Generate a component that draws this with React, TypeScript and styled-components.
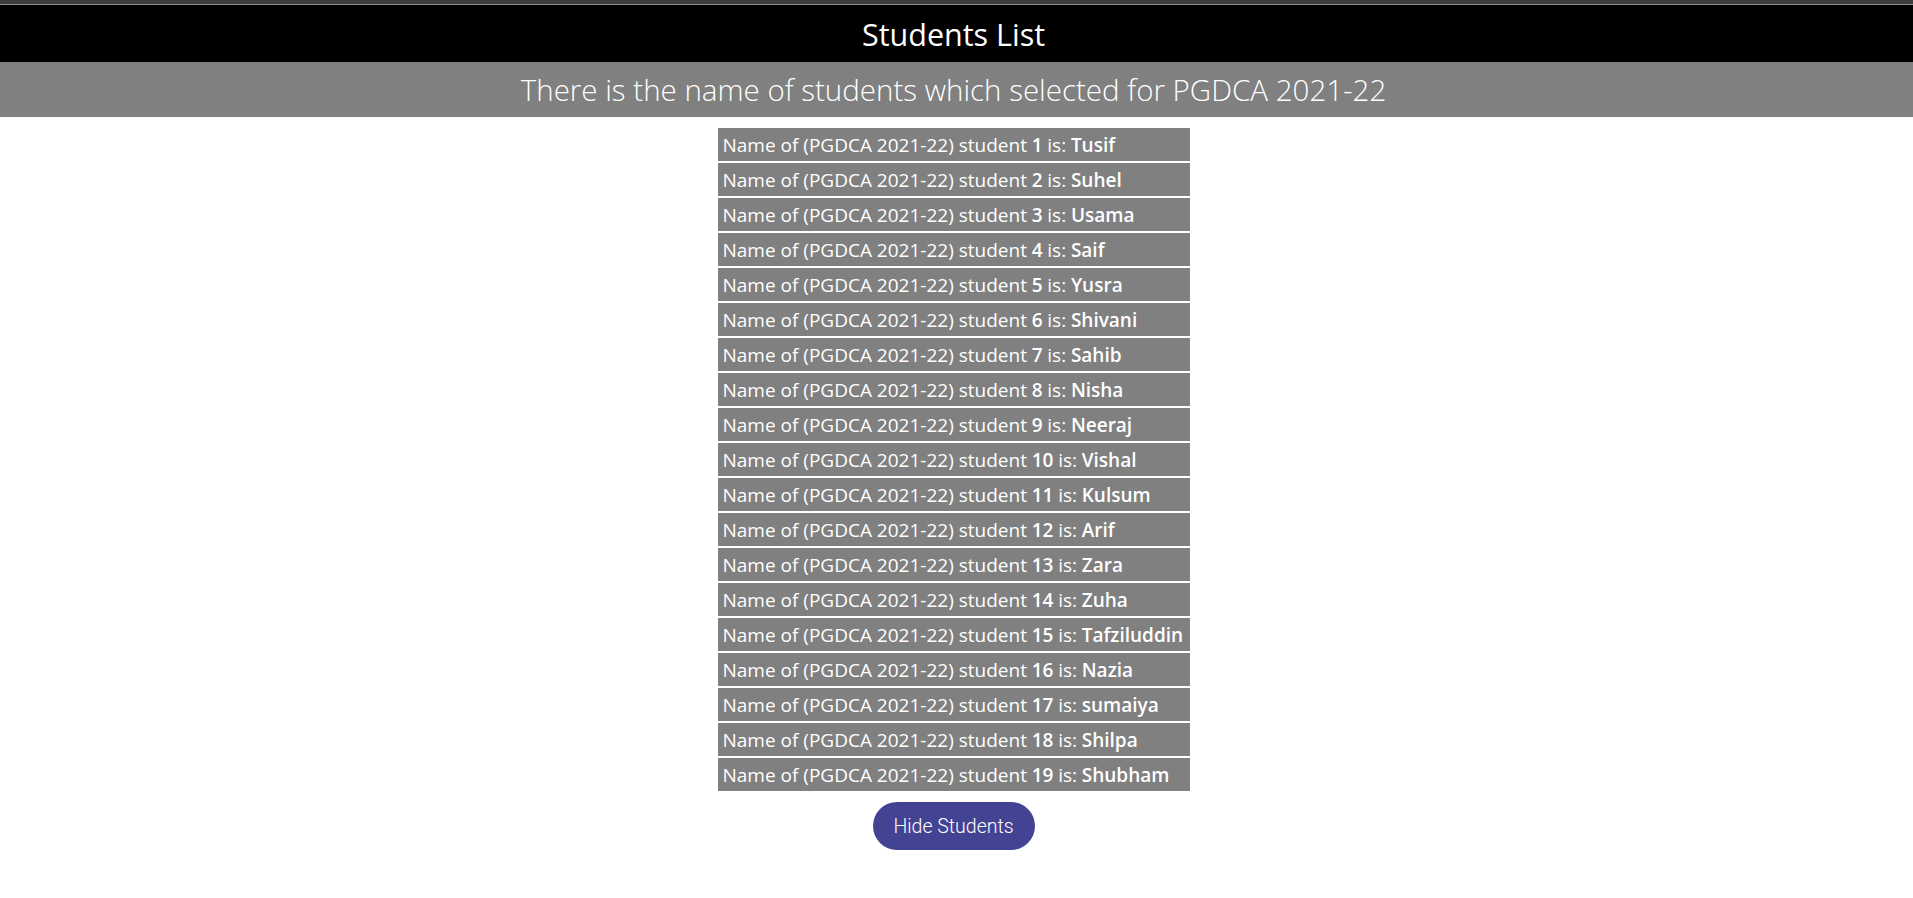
import React from "react";
import styled, { createGlobalStyle } from "styled-components";

const GlobalStyle = createGlobalStyle`
  html, body {
    margin: 0;
    padding: 0;
    background: #ffffff;
  }
  body {
    font-family: "Open Sans", "Noto Sans", sans-serif;
  }
`;

const Page = styled.div`
  display: flex;
  flex-direction: column;
  align-items: stretch;
  min-height: 898px;
`;

const TopStrip = styled.div`
  height: 4px;
  background: #3c3c3e;
  border-bottom: 1px solid #8c8c8c;
`;

const Title = styled.h1`
  margin: 0;
  height: 57px;
  padding-right: 6px;
  background: #000000;
  color: #ffffff;
  display: flex;
  align-items: center;
  justify-content: center;
  font-family: "Open Sans", "Noto Sans", sans-serif;
  font-weight: 500;
  font-size: 30.5px;
`;

const Subtitle = styled.h2`
  margin: 0;
  height: 55px;
  padding-right: 6px;
  background: #808080;
  color: #ffffff;
  display: flex;
  align-items: center;
  justify-content: center;
  font-family: "Open Sans", "Noto Sans", sans-serif;
  font-weight: 300;
  font-size: 29.5px;
`;

const Content = styled.main`
  display: flex;
  flex-direction: column;
  align-items: center;
  padding: 11px 6px 0 0;
  gap: 11px;
`;

const List = styled.ul`
  list-style: none;
  margin: 0;
  padding: 0;
  width: 472px;
  display: flex;
  flex-direction: column;
  gap: 2px;
`;

const Row = styled.li`
  height: 33px;
  background: #808080;
  color: #ffffff;
  padding: 0 0 0 5px;
  display: flex;
  align-items: center;
  white-space: nowrap;
  font-family: "Open Sans", "Noto Sans", sans-serif;
  font-weight: 400;
  font-size: 19px;
`;

const Num = styled.b`
  font-weight: 600;
  margin: 0 0.25em;
`;

const Name = styled.b`
  font-weight: 600;
  margin-left: 0.25em;
`;

const Button = styled.button`
  width: 162px;
  height: 48px;
  border: none;
  border-radius: 24px;
  background: #434394;
  color: #ffffff;
  font-family: Roboto, "Open Sans", sans-serif;
  font-weight: 300;
  font-size: 19.5px;
  cursor: pointer;
`;

const students = [
  "Tusif",
  "Suhel",
  "Usama",
  "Saif",
  "Yusra",
  "Shivani",
  "Sahib",
  "Nisha",
  "Neeraj",
  "Vishal",
  "Kulsum",
  "Arif",
  "Zara",
  "Zuha",
  "Tafziluddin",
  "Nazia",
  "sumaiya",
  "Shilpa",
  "Shubham",
];

export default function App() {
  return (
    <>
      <GlobalStyle />
      <Page>
        <TopStrip />
        <Title>Students List</Title>
        <Subtitle>There is the name of students which selected for PGDCA 2021-22</Subtitle>
        <Content>
          <List>
            {students.map((name, i) => (
              <Row key={i}>
                Name of (PGDCA 2021-22) student<Num>{i + 1}</Num>is:<Name>{name}</Name>
              </Row>
            ))}
          </List>
          <Button>Hide Students</Button>
        </Content>
      </Page>
    </>
  );
}
